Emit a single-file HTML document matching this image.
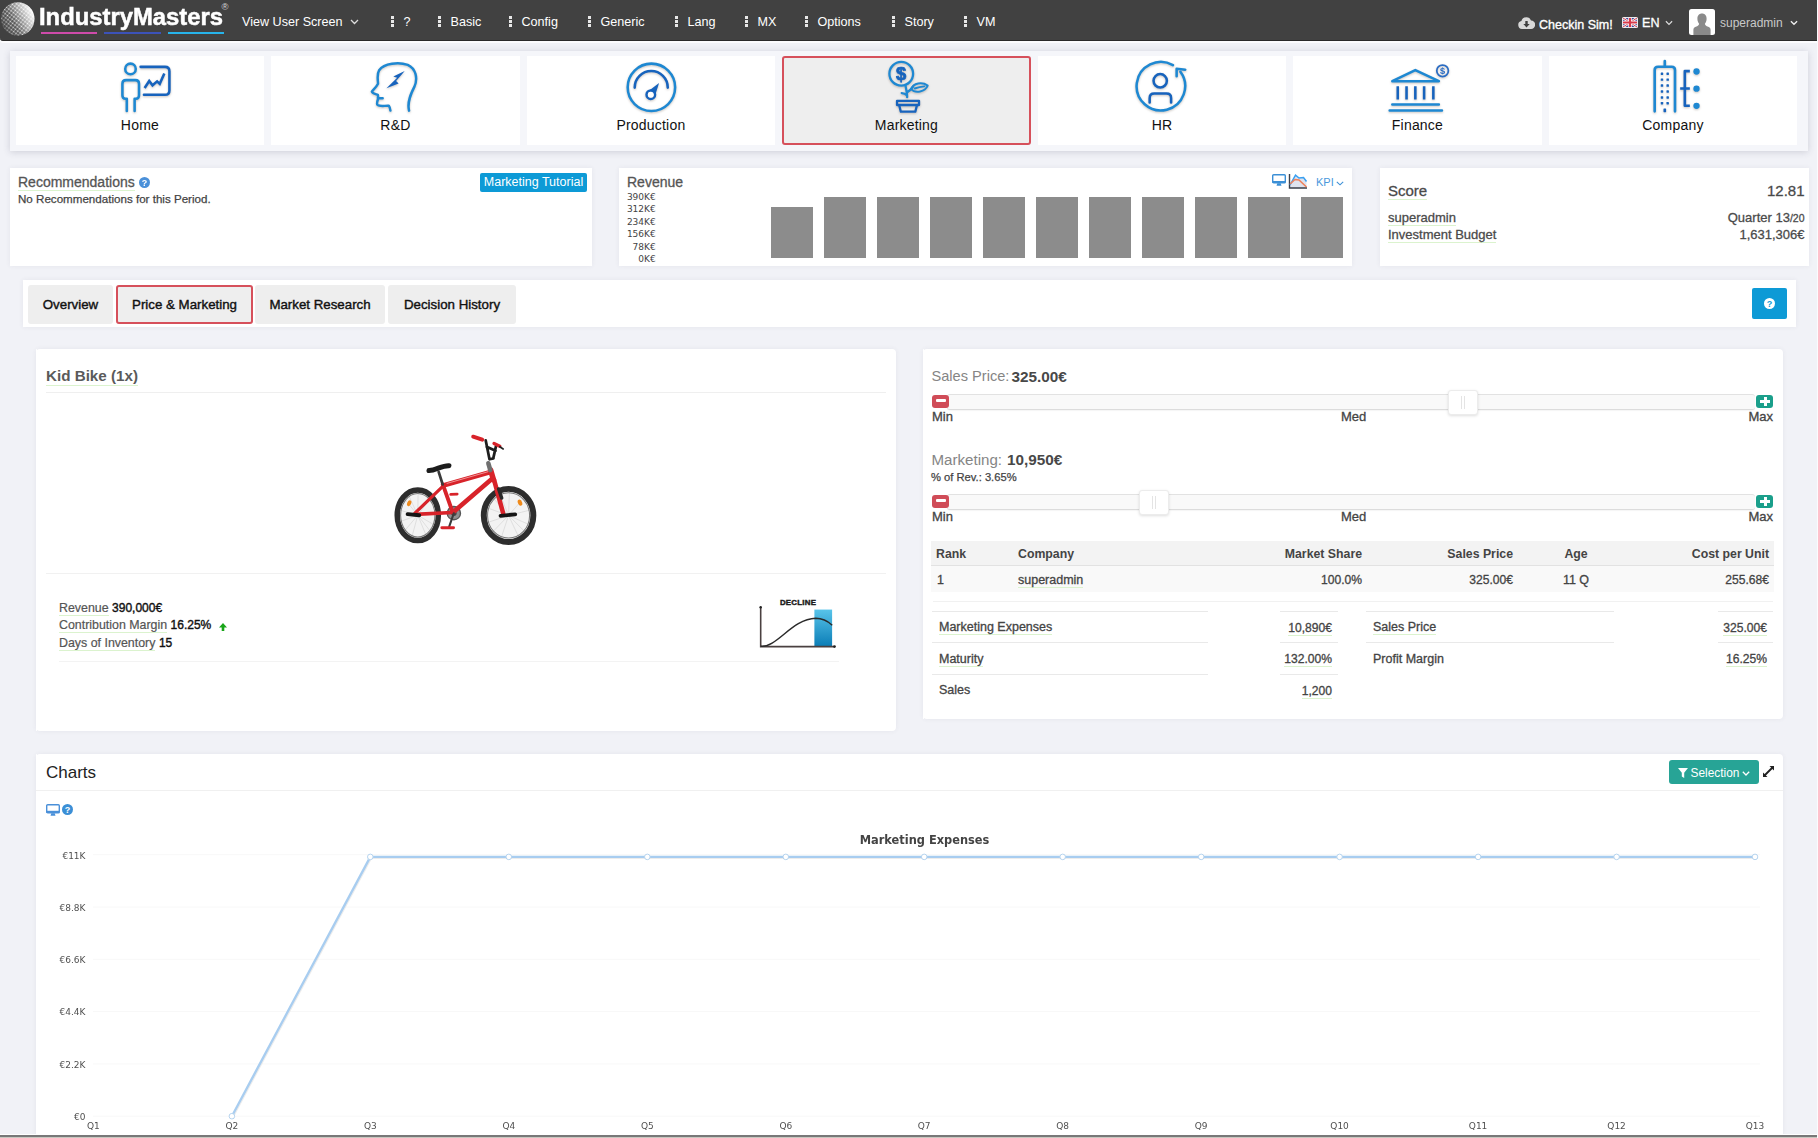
<!DOCTYPE html>
<html lang="en">
<head>
<meta charset="utf-8">
<title>IndustryMasters - Marketing</title>
<style>
*{box-sizing:border-box;margin:0;padding:0}
html,body{width:1818px;height:1138px;overflow:hidden}
body{background:#f1f2f7;font-family:"Liberation Sans",sans-serif;color:#333;position:relative;font-size:13px}
.abs{position:absolute}
/* NAVBAR */
#nav{position:absolute;left:0;top:0;width:1817px;height:41px;background:#414141;border-bottom:1px solid #2a2a2a;border-bottom-left-radius:3px;box-shadow:0 2px 0 #fcfcfe}
#nav .it{position:absolute;top:0;height:41px;line-height:44px;color:#fff;font-size:12.6px;white-space:nowrap}
#nav .dots{display:inline-block;width:3px;height:11px;margin-right:9.5px;vertical-align:-1px;background:
 linear-gradient(#e8e8e8,#e8e8e8) 0 0/3px 3px no-repeat,
 linear-gradient(#e8e8e8,#e8e8e8) 0 4px/3px 3px no-repeat,
 linear-gradient(#e8e8e8,#e8e8e8) 0 8px/3px 3px no-repeat}
.logo-t{position:absolute;left:39px;top:1px;font-weight:bold;font-size:24.2px;color:#fff;letter-spacing:0;line-height:32px;transform-origin:0 0;transform:scaleX(0.985);white-space:nowrap;-webkit-text-stroke:.5px #fff}
/* TILE STRIP */
#strip{position:absolute;left:9.500px;top:51px;width:1798px;height:100px;background:#f5f6fa;box-shadow:0 1px 7px rgba(60,60,90,.2)}
.tile{position:absolute;top:56px;width:248.500px;height:88.600px;background:#fff}
.tile.act{background:#eee;border:2.500px solid #d6505b;border-radius:3px}
.tile .lb{position:absolute;left:0;width:100%;top:61px;text-align:center;font-size:14px;color:#111;line-height:16px;letter-spacing:.2px}
.ic{position:absolute;overflow:visible;filter:drop-shadow(0 1px 1px rgba(60,40,20,.28))}
/* CARDS */
.card{position:absolute;background:#fff;box-shadow:0 0 5px rgba(60,60,80,.07)}
.card:before{content:'';position:absolute;left:-.5px;top:0;width:1px;height:100%;background:#fff;border-radius:inherit}
.h15{font-size:14px;color:#555;line-height:16px;-webkit-text-stroke:.3px #555}
.ul{border-bottom:1px solid #dbf3ce}
.bars i{position:absolute;background:#8c8c8c;display:block}
.ylab{position:absolute;font-family:'DejaVu Sans',sans-serif;font-size:9px;color:#444;text-align:right;width:40px;line-height:10px}
/* tabs */
.tab{position:absolute;top:285px;height:39px;background:#eee;border-radius:3px;font-size:13.3px;color:#111;text-align:center;line-height:39px;-webkit-text-stroke:0.4px #111}
.tab.act{border:2px solid #d6505b;line-height:35px;background:#eee}

.r4{border-radius:4px}
.kv{font-size:12.4px;color:#555;line-height:15px;white-space:nowrap;margin-top:.7px;-webkit-text-stroke:.2px #555}
.kv b{color:#111;font-weight:normal;font-size:12px;-webkit-text-stroke:.4px #111}
.lt{color:#858585}
.trk{position:absolute;height:16px;background:#f9f9f9;border-top:1px solid #e2e2e2;border-bottom:1px solid #dcdcdc;border-radius:3px;box-shadow:0 1px 1px rgba(0,0,0,.04)}
.mbtn,.pbtn{position:absolute;width:17px;height:13px;border-radius:3px}
.mbtn{background:#d04c58}.pbtn{background:#1a9f8b}
.mbtn i{position:absolute;left:4px;top:4px;width:10px;height:3px;background:#fff;border-radius:1px}
.pbtn i{position:absolute;left:4px;top:5px;width:10px;height:3px;background:#fff}
.pbtn em{position:absolute;left:7.500px;top:2px;width:3px;height:9px;background:#fff}
.hdl{position:absolute;width:30px;height:25px;background:#fff;border:1px solid #ececec;border-radius:3px;box-shadow:0 1px 3px rgba(0,0,0,.13)}
.hdl:before,.hdl:after{content:"";position:absolute;top:5px;width:1px;height:13px;background:#e4e4e4;left:12px}
.hdl:after{left:15px}
.sl{font-size:13px;color:#444;line-height:14px;-webkit-text-stroke:.3px #444;margin-top:1px}
.th{font-size:12.300px;font-weight:bold;color:#444;line-height:14px;white-space:nowrap}
.td{font-size:12.500px;color:#444;line-height:14px;white-space:nowrap;-webkit-text-stroke:.3px #444}
.ln{height:1px;background:#e9e9e9}
.nm{font-size:12.100px}
</style>
</head>
<body>

<!-- ================= NAVBAR ================= -->
<div id="nav">
  <svg class="abs" style="left:0;top:0" width="36" height="40" viewBox="0 0 36 40">
    <defs>
      <linearGradient id="gl" x1="0.05" y1="0.75" x2="0.95" y2="0.3">
        <stop offset="0" stop-color="#fff" stop-opacity="0"/><stop offset="0.35" stop-color="#fff" stop-opacity="0.05"/><stop offset="0.7" stop-color="#fff" stop-opacity="0.55"/><stop offset="1" stop-color="#fff" stop-opacity="0.98"/>
      </linearGradient>
      <linearGradient id="gm" x1="0" y1="0.8" x2="1" y2="0.3">
        <stop offset="0" stop-color="#fff" stop-opacity="0.25"/><stop offset="0.3" stop-color="#fff" stop-opacity="0.8"/><stop offset="1" stop-color="#fff" stop-opacity="1"/>
      </linearGradient>
      <pattern id="dots" width="2.950" height="2.950" patternUnits="userSpaceOnUse" patternTransform="rotate(38 17 19)"><circle cx="1.475" cy="1.475" r="1.020" fill="#fff"/></pattern>
      <mask id="dm"><circle cx="17.700" cy="19" r="16.800" fill="url(#gm)"/></mask>
    </defs>
    <circle cx="17.700" cy="19" r="16.800" fill="url(#dots)" mask="url(#dm)"/>
    <circle cx="17.700" cy="19" r="16.800" fill="url(#gl)"/>
  </svg>
  <div class="logo-t">IndustryMasters</div>
  <div class="abs" style="left:221.500px;top:1.500px;font-size:9.500px;color:#d8d8d8;line-height:10px">®</div>
  <div class="abs" style="left:40.500px;top:31.500px;width:56.500px;height:2.500px;background:#cf4bab"></div>
  <div class="abs" style="left:104px;top:31.500px;width:56.500px;height:2.500px;background:#3c52b8"></div>
  <div class="abs" style="left:168px;top:31.500px;width:56px;height:2.500px;background:#27b4ea"></div>

  <div class="it" style="left:242px">View User Screen <svg width="9" height="6" viewBox="0 0 9 6" style="margin-left:4px;vertical-align:1px"><path d="M1 1l3.5 3.5L8 1" fill="none" stroke="#ddd" stroke-width="1.3"/></svg></div>
  <div class="it" style="left:391px"><span class="dots"></span>?</div>
  <div class="it" style="left:438px"><span class="dots"></span>Basic</div>
  <div class="it" style="left:509px"><span class="dots"></span>Config</div>
  <div class="it" style="left:588px"><span class="dots"></span>Generic</div>
  <div class="it" style="left:675px"><span class="dots"></span>Lang</div>
  <div class="it" style="left:745px"><span class="dots"></span>MX</div>
  <div class="it" style="left:805px"><span class="dots"></span>Options</div>
  <div class="it" style="left:892px"><span class="dots"></span>Story</div>
  <div class="it" style="left:964px"><span class="dots"></span>VM</div>

  <svg class="abs" style="left:1518px;top:17px" width="17" height="12" viewBox="0 0 17 12"><path d="M4 12a4 4 0 0 1-.6-7.9A5 5 0 0 1 13 3.6 4.2 4.2 0 0 1 13 12z" fill="#d8d8d8"/><path d="M7.3 4h2.4v3h2L8.5 10.4 5.3 7h2z" fill="#3e3e3e"/></svg>
  <div class="it" style="left:1539px;top:3px;font-size:12.500px;-webkit-text-stroke:.35px #fff">Checkin Sim!</div>
  <svg class="abs" style="left:1622px;top:17px" width="16" height="11" viewBox="0 0 16 11"><rect width="16" height="11" rx="1.5" fill="#e9e9ee"/><rect x="1" y="1" width="14" height="9" fill="#3a4a9a"/><path d="M1 1l14 9M15 1L1 10" stroke="#fff" stroke-width="2.4"/><path d="M1 1l14 9M15 1L1 10" stroke="#d03a4a" stroke-width="1"/><path d="M8 1v9M1 5.5h14" stroke="#fff" stroke-width="3.6"/><path d="M8 1v9M1 5.5h14" stroke="#d8394a" stroke-width="2.2"/></svg>
  <div class="it" style="left:1642px;top:1px;-webkit-text-stroke:.3px #fff">EN <svg width="8" height="6" viewBox="0 0 9 6" style="margin-left:2px;vertical-align:1px"><path d="M1 1l3.5 3.5L8 1" fill="none" stroke="#ddd" stroke-width="1.3"/></svg></div>
  <svg class="abs" style="left:1689px;top:9px" width="26" height="26" viewBox="0 0 26 26"><rect width="26" height="26" rx="2.5" fill="#fff"/><path d="M13 4.5c3 0 4.6 2.2 4.6 5.2 0 2-.7 3.9-1.7 5 .2 1.6 1.2 2.3 3.3 3.1 1.700.7 2.400 1.500 2.400 3.200V26H4.400v-5c0-1.700.7-2.500 2.400-3.200 2.100-.8 3.100-1.500 3.300-3.100-1-1.100-1.700-3-1.700-5 0-3 1.600-5.200 4.600-5.200z" fill="#8a8a8a"/></svg>
  <div class="it" style="left:1720px;top:1px;font-size:12px;color:#c9c9c9">superadmin <svg width="8" height="6" viewBox="0 0 9 6" style="margin-left:3.500px;vertical-align:1px"><path d="M1 1l3.5 3.500L8 1" fill="none" stroke="#eee" stroke-width="1.500"/></svg></div>
</div>

<!-- ================= TILE STRIP ================= -->
<div id="strip"></div>
<div class="tile" style="left:15.7px"><div class="lb">Home</div></div>
<div class="tile" style="left:271.2px"><div class="lb">R&amp;D</div></div>
<div class="tile" style="left:526.7px"><div class="lb">Production</div></div>
<div class="tile act" style="left:782.2px"><div class="lb" style="top:59px">Marketing</div></div>
<div class="tile" style="left:1037.7px"><div class="lb">HR</div></div>
<div class="tile" style="left:1293.2px"><div class="lb">Finance</div></div>
<div class="tile" style="left:1548.7px"><div class="lb">Company</div></div>


<!-- ================= TILE ICONS ================= -->
<svg class="ic" style="left:100px;top:50px" width="100" height="100" viewBox="0 0 1138 1138" fill="none" stroke-width="29" stroke-linecap="round" stroke-linejoin="round">
  <circle cx="347" cy="215" r="60" stroke="#1e88d2"/>
  <path d="M305 695V555h-15q-35 0-35-40V385q0-42 42-42h105q42 0 42 42v130q0 40-35 40h-15v140" stroke="#1e88d2"/>
  <path d="M462 192H740q50 0 50 50v218q0 50-50 50H500" stroke="#1763bd"/>
  <path d="M508 432l52-80 38 50 52-45 30 28 52-118" stroke="#1763bd" stroke-linecap="butt" stroke-linejoin="miter"/>
</svg>
<svg class="ic" style="left:355px;top:50px" width="100" height="100" viewBox="0 0 1138 1138" fill="none" stroke-width="28" stroke-linecap="round" stroke-linejoin="round">
  <path d="M615 690C590 590 640 490 675 420 720 320 690 210 600 170 500 135 330 150 275 230 245 280 262 340 262 385 240 430 195 460 192 475c8 25 50 28 68 35 5 15 2 28 0 38h55h-50c-8 25-22 60-10 75 25 25 90 8 130 12 12 15 15 35 18 55" stroke="#1e88d2"/>
  <path d="M566 240L436 302L480 317L358 434L496 380L468 354z" fill="#1763bd" stroke="none"/>
</svg>
<svg class="ic" style="left:600px;top:50px" width="100" height="100" viewBox="0 0 1138 1138" fill="none" stroke-width="29" stroke-linecap="round" stroke-linejoin="round">
  <circle cx="585" cy="425" r="270" stroke="#1e88d2"/>
  <path d="M395 428a188 188 0 0 1 376 0" stroke="#1763bd"/>
  <circle cx="578" cy="508" r="48" stroke="#1763bd"/>
  <path d="M672 375L560 462l68 52z" fill="#1763bd" stroke="none"/>
  <circle cx="578" cy="508" r="34" fill="#fff" stroke="none"/>
</svg>
<svg class="ic" style="left:856px;top:50px" width="100" height="100" viewBox="0 0 1138 1138" fill="none" stroke-width="26" stroke-linecap="round" stroke-linejoin="round">
  <circle cx="515" cy="270" r="135" stroke="#1e88d2"/>
  <text x="515" y="340" font-size="210" font-weight="bold" fill="#1763bd" stroke="#1763bd" stroke-width="8" text-anchor="middle" font-family="Liberation Sans,sans-serif">$</text>
  <path d="M562 402c10 45 20 90 20 135M520 490c20 0 45 10 58 25M590 475c25-15 45-40 60-60" stroke="#1e88d2"/>
  <path d="M628 445c25-70 125-85 188-40-30 70-140 95-188 40zM668 438c35-14 75-22 110-24" stroke="#1e88d2" stroke-width="22"/>
  <rect x="467" y="578" width="250" height="48" stroke="#1763bd"/>
  <path d="M492 630l18 72h165l18-72" stroke="#1763bd"/>
</svg>
<svg class="ic" style="left:1111px;top:50px" width="100" height="100" viewBox="0 0 1138 1138" fill="none" stroke-width="29" stroke-linecap="round" stroke-linejoin="round">
  <path d="M705 172A276 276 0 1 0 790 248" stroke="#1e88d2"/>
  <path d="M747 298V214l98 10" stroke="#1e88d2"/>
  <circle cx="560" cy="350" r="76" stroke="#1763bd"/>
  <path d="M440 598v-50q0-52 52-52h140q52 0 52 52v50" stroke="#1763bd"/>
</svg>
<svg class="ic" style="left:1367px;top:50px" width="100" height="100" viewBox="0 0 1138 1138" fill="none" stroke-width="29" stroke-linecap="round" stroke-linejoin="round">
  <path d="M288 355L550 228l268 127z" stroke="#1e88d2"/>
  <path d="M350 412v152M450 412v152M550 412v152M650 412v152M755 412v152" stroke="#1763bd" stroke-linecap="butt"/>
  <path d="M288 620h530M258 688h595" stroke="#1e88d2"/>
  <circle cx="860" cy="237" r="66" stroke="#2a6cc4" stroke-width="20"/>
  <text x="860" y="275" font-size="105" font-weight="bold" fill="#2a6cc4" stroke="none" text-anchor="middle" font-family="Liberation Sans,sans-serif">$</text>
</svg>
<svg class="ic" style="left:1622px;top:50px" width="100" height="100" viewBox="0 0 1138 1138" fill="none" stroke-width="30" stroke-linecap="round" stroke-linejoin="round">
  <path d="M372 698V228q0-38 38-38h155q38 0 38 38v470M487 188v-62" stroke="#1e88d2"/>
  <g fill="#1763bd" stroke="none">
    <rect x="441" y="257" width="28" height="28" rx="5"/><rect x="506" y="257" width="28" height="28" rx="5"/>
    <rect x="441" y="323" width="28" height="28" rx="5"/><rect x="506" y="323" width="28" height="28" rx="5"/>
    <rect x="441" y="391" width="28" height="28" rx="5"/><rect x="506" y="391" width="28" height="28" rx="5"/>
    <rect x="441" y="458" width="28" height="28" rx="5"/><rect x="506" y="458" width="28" height="28" rx="5"/>
    <rect x="441" y="526" width="28" height="28" rx="5"/><rect x="506" y="526" width="28" height="28" rx="5"/>
    <rect x="441" y="592" width="28" height="28" rx="5"/><rect x="506" y="592" width="28" height="28" rx="5"/>
    <rect x="472" y="665" width="30" height="42" rx="6"/>
  </g>
  <path d="M772 240h-57v395h57M662 438h110" stroke="#1763bd" stroke-linecap="butt"/>
  <circle cx="848" cy="245" r="36" fill="#1e88d2" stroke="none"/>
  <circle cx="848" cy="440" r="36" fill="#1e88d2" stroke="none"/>
  <circle cx="848" cy="635" r="36" fill="#1e88d2" stroke="none"/>
</svg>

<!-- ================= ROW 2 ================= -->
<div class="card" id="rec" style="left:10px;top:168px;width:582px;height:97.700px">
  <div class="abs h15" style="left:8px;top:6px"><span class="ul">Recommendations</span></div>
  <svg class="abs" style="left:139px;top:177px;position:fixed" width="11" height="11" viewBox="0 0 11 11"><circle cx="5.5" cy="5.5" r="5.5" fill="#4a90d9"/><text x="5.5" y="9" font-size="9" font-weight="bold" fill="#fff" text-anchor="middle" font-family="Liberation Sans,sans-serif">?</text></svg>
  <div class="abs" style="left:8px;top:24px;font-size:11.6px;color:#444;line-height:14px;-webkit-text-stroke:.25px #444">No Recommendations for this Period.</div>
  <div class="abs" style="left:470px;top:5px;width:107px;height:19px;background:#0d9ad6;border-radius:2px;color:#fff;font-size:12.5px;line-height:19px;text-align:center">Marketing Tutorial</div>
</div>

<div class="card" id="rev" style="left:619px;top:168px;width:733px;height:97.700px">
  <div class="abs h15" style="left:8px;top:6px">Revenue</div>
  <div class="ylab" style="left:-3.300px;top:24px">390K€</div>
  <div class="ylab" style="left:-3.300px;top:36px">312K€</div>
  <div class="ylab" style="left:-3.300px;top:49px">234K€</div>
  <div class="ylab" style="left:-3.300px;top:61px">156K€</div>
  <div class="ylab" style="left:-3.300px;top:74px">78K€</div>
  <div class="ylab" style="left:-3.300px;top:86px">0K€</div>
  <div class="bars" style="position:absolute;left:.6px;top:-.3px">
    <i style="left:151px;top:39px;width:42px;height:51px"></i>
    <i style="left:204px;top:29px;width:42px;height:61px"></i>
    <i style="left:257px;top:29px;width:42px;height:61px"></i>
    <i style="left:310px;top:29px;width:42px;height:61px"></i>
    <i style="left:363px;top:29px;width:42px;height:61px"></i>
    <i style="left:416px;top:29px;width:42px;height:61px"></i>
    <i style="left:469px;top:29px;width:42px;height:61px"></i>
    <i style="left:522px;top:29px;width:42px;height:61px"></i>
    <i style="left:575px;top:29px;width:42px;height:61px"></i>
    <i style="left:628px;top:29px;width:42px;height:61px"></i>
    <i style="left:681px;top:29px;width:42px;height:61px"></i>
  </div>
  <svg class="abs" style="left:653px;top:6px" width="14" height="12" viewBox="0 0 14 12"><rect x=".7" y=".7" width="12.600" height="8.200" rx="1" fill="#fff" stroke="#3b8fd6" stroke-width="1.400"/><rect x=".7" y="7" width="12.600" height="2" fill="#3b8fd6"/><path d="M4.500 11.800h5l-.8-2.500H5.300z" fill="#3b8fd6"/></svg>
  <svg class="abs" style="left:669px;top:6px" width="20" height="15" viewBox="0 0 20 15"><path d="M2 11L7.500 1.200 11 4l4.500-.5L18.500 7.500V14H2z" fill="#dfe3ee"/><path d="M1.500 0v14H19" fill="none" stroke="#3a3f4a" stroke-width="1.400"/><path d="M2 11L7.500 1.200 11 4l4.500-.5L18.500 7.500" fill="none" stroke="#3aa0f0" stroke-width="1.500"/><path d="M2 10L7 5.500 11 6l7.500 7" fill="none" stroke="#f0805a" stroke-width="1.500"/></svg>
  <div class="abs" style="left:697px;top:8px;font-size:11px;color:#4a98dc;line-height:12px">KPI</div>
  <svg class="abs" style="left:717px;top:12.500px" width="8" height="5" viewBox="0 0 8 5"><path d="M.8.800L4 3.800 7.200.8" fill="none" stroke="#3b8fd6" stroke-width="1.100"/></svg>
</div>

<div class="card" id="score" style="left:1380px;top:168px;width:428.500px;height:97.700px;-webkit-text-stroke:.3px #555">
  <div class="abs" style="left:8px;top:14px;font-size:15px;color:#444;line-height:18px"><span class="ul">Score</span></div>
  <div class="abs" style="right:4px;top:14px;font-size:15px;color:#444;line-height:18px">12.81</div>
  <div class="abs" style="left:8px;top:42px;font-size:13px;color:#444;line-height:15px"><span class="ul">superadmin</span></div>
  <div class="abs" style="right:4px;top:42px;font-size:13px;color:#444;line-height:15px">Quarter 13<span style="font-size:10.5px">/20</span></div>
  <div class="abs" style="left:8px;top:59px;font-size:13px;color:#444;line-height:15px"><span class="ul">Investment Budget</span></div>
  <div class="abs" style="right:4px;top:59px;font-size:13px;color:#444;line-height:15px">1,631,306€</div>
</div>

<!-- ================= TABS ================= -->
<div class="card" id="tabs" style="left:23px;top:280px;width:1773px;height:47px"></div>
<div class="tab" style="left:28px;width:85px">Overview</div>
<div class="tab act" style="left:116px;width:137px">Price &amp; Marketing</div>
<div class="tab" style="left:255px;width:130px">Market Research</div>
<div class="tab" style="left:388px;width:128px">Decision History</div>
<div class="abs" style="left:1752px;top:288px;width:35px;height:31px;background:#0d9ad6;border-radius:2px">
  <svg class="abs" style="left:12px;top:10px" width="11" height="11" viewBox="0 0 11 11"><circle cx="5.5" cy="5.500" r="5.500" fill="#fff"/><text x="5.500" y="9" font-size="9" font-weight="bold" fill="#0d9ad6" text-anchor="middle" font-family="Liberation Sans,sans-serif">?</text></svg>
</div>


<!-- ================= KID BIKE CARD ================= -->
<div class="card r4" id="bike" style="left:36px;top:349px;width:860px;height:382px">
  <div class="abs" style="left:10px;top:18px;font-size:15.2px;font-weight:bold;color:#5a5a5a;line-height:18px"><span class="ul" style="padding-bottom:1px">Kid Bike (1x)</span></div>
  <div class="abs" style="left:10px;top:43px;width:840px;height:1px;background:#efefef"></div>
  <div class="abs" style="left:10px;top:224px;width:840px;height:1px;background:#f1f1f1"></div>
  <div class="abs kv" style="left:23px;top:251px"><span class="ul">Revenue</span> <b>390,000€</b></div>
  <div class="abs kv" style="left:23px;top:268.700px"><span class="ul">Contribution Margin</span> <b>16.25%</b></div>
  <svg class="abs" style="left:183px;top:273.500px" width="8" height="8" viewBox="0 0 8 8"><path d="M4 0L8 4.500H5.300V8H2.700V4.500H0z" fill="#19a519"/></svg>
  <div class="abs kv" style="left:23px;top:286.500px"><span class="ul">Days of Inventory</span> <b>15</b></div>
  <div class="abs" style="left:23px;top:312px;width:780px;height:1px;background:#f3f3f3"></div>
</div>

<!-- bike picture -->
<svg class="abs" style="left:385px;top:425px" width="160" height="130" viewBox="0 0 1401 1138">
  <ellipse cx="287" cy="790" rx="160" ry="200" fill="#f3f3f3"/>
  <ellipse cx="1082" cy="792" rx="195" ry="210" fill="#f3f3f3"/>
  <g fill="none" stroke="#cfcfcf" stroke-width="5">
    <path d="M287 790L150 620M287 790L420 610M287 790L120 850M287 790L440 880M287 790L230 1000M287 790L370 990M287 790L110 740M287 790L290 580M287 790L200 600M287 790L160 940M287 790L420 960"/>
    <path d="M1082 792L930 620M1082 792L1240 610M1082 792L880 860M1082 792L1280 880M1082 792L1010 1010M1082 792L1180 1000M1082 792L880 720M1082 792L1090 570M1082 792L1290 740M1082 792L1000 590M1082 792L920 960M1082 792L1250 960"/>
  </g>
  <ellipse cx="287" cy="790" rx="180" ry="222" fill="none" stroke="#2d2d2d" stroke-width="48"/>
  <ellipse cx="287" cy="790" rx="150" ry="190" fill="none" stroke="#777" stroke-width="9"/>
  <ellipse cx="1082" cy="792" rx="217" ry="233" fill="none" stroke="#2d2d2d" stroke-width="52"/>
  <ellipse cx="1082" cy="792" rx="184" ry="198" fill="none" stroke="#777" stroke-width="9"/>
  <ellipse cx="212" cy="685" rx="17" ry="26" fill="#f08a1a" transform="rotate(25 212 685)"/>
  <ellipse cx="1182" cy="680" rx="18" ry="28" fill="#f08a1a" transform="rotate(-25 1182 680)"/>
  <circle cx="603" cy="772" r="58" fill="#8f8f8f" stroke="#555" stroke-width="12"/>
  <circle cx="603" cy="772" r="24" fill="#444"/>
  <g fill="none" stroke="#d8232a" stroke-linecap="round">
    <path d="M508 535L262 772" stroke-width="28"/>
    <path d="M592 766L262 782" stroke-width="32"/>
    <path d="M506 520L592 762" stroke-width="34"/>
    <path d="M510 530L925 412" stroke-width="40"/>
    <path d="M940 468L604 758" stroke-width="40"/>
    <path d="M925 395L950 480" stroke-width="48"/>
    <path d="M955 480L1035 775" stroke-width="40"/>
  </g>
  <path d="M540 512L905 408" stroke="#f6b0b0" stroke-width="7" fill="none"/>
  <g fill="none" stroke-linecap="round">
    <path d="M470 410L505 520" stroke="#3a3a3a" stroke-width="24"/>
    <path d="M385 398C440 400 500 352 560 356" stroke="#1c1c1c" stroke-width="44"/>
    <path d="M905 335L922 395" stroke="#6f6f6f" stroke-width="40"/>
    <path d="M915 300L882 135M948 292L972 185M890 190L968 225M915 300L950 292" stroke="#1e1e1e" stroke-width="24"/>
    <path d="M772 102L852 128" stroke="#d8232a" stroke-width="34"/>
    <path d="M955 162L1005 186" stroke="#d8232a" stroke-width="30"/>
    <path d="M1005 190L1035 210" stroke="#222" stroke-width="14"/>
    <path d="M198 780L300 790" stroke="#151515" stroke-width="34"/>
    <path d="M1012 795L1140 782" stroke="#151515" stroke-width="34"/>
    <path d="M603 772L562 890" stroke="#3a3a3a" stroke-width="18"/>
    <path d="M498 900L600 900" stroke="#d8232a" stroke-width="26"/>
    <path d="M575 607L632 605" stroke="#d8232a" stroke-width="24"/>
    <path d="M995 560L1022 640" stroke="#2a2a2a" stroke-width="30"/>
  </g>
</svg>

<!-- life-cycle (DECLINE) -->
<svg class="abs" style="left:745px;top:590px" width="105" height="70" viewBox="0 0 1707 1138">
  <defs><linearGradient id="dg" x1="0" y1="0" x2="0" y2="1"><stop offset="0" stop-color="#58c4ea"/><stop offset="1" stop-color="#0b7db6"/></linearGradient></defs>
  <rect x="1128" y="318" width="288" height="600" fill="url(#dg)"/>
  <path d="M255 280V920H1450" fill="none" stroke="#4a4040" stroke-width="26"/>
  <circle cx="255" cy="280" r="20" fill="#222"/><circle cx="1455" cy="920" r="22" fill="#222"/>
  <path d="M258 915C520 940 760 470 1150 460c110 0 200 50 268 112" fill="none" stroke="#2a2a2a" stroke-width="24"/>
  <text x="862" y="240" font-size="128" font-weight="bold" fill="#1a1a1a" stroke="#1a1a1a" stroke-width="7" text-anchor="middle" font-family="Liberation Sans,sans-serif" letter-spacing="4">DECLINE</text>
</svg>

<!-- ================= PRICE CARD ================= -->
<div class="card r4" id="price" style="left:923px;top:349px;width:860px;height:370px">
  <div class="abs lt" style="left:8.500px;top:17.500px;font-size:14.600px;line-height:19px;white-space:nowrap">Sales Price:</div><div class="abs" style="left:88.500px;top:17.500px;font-size:15.300px;font-weight:bold;color:#484848;line-height:19px;white-space:nowrap">325.00€</div>
  <div class="trk" style="left:24px;top:45px;width:808px"></div>
  <div class="mbtn" style="left:9px;top:46px"><i></i></div>
  <div class="pbtn" style="left:833px;top:46px"><i></i><em></em></div>
  <div class="hdl" style="left:524.500px;top:40.500px"></div>
  <div class="abs sl" style="left:9px;top:60px">Min</div>
  <div class="abs sl" style="left:418px;top:60px">Med</div>
  <div class="abs sl" style="right:10px;top:60px">Max</div>

  <div class="abs lt" style="left:8.500px;top:100.500px;font-size:15.100px;line-height:19px;white-space:nowrap">Marketing:</div><div class="abs" style="left:84px;top:100.500px;font-size:15.300px;font-weight:bold;color:#484848;line-height:19px;white-space:nowrap">10,950€</div>
  <div class="abs" style="left:8px;top:121px;font-size:11.200px;color:#444;line-height:14px;-webkit-text-stroke:.25px #444">% of Rev.: 3.65%</div>
  <div class="trk" style="left:24px;top:145px;width:808px"></div>
  <div class="mbtn" style="left:9px;top:146px"><i></i></div>
  <div class="pbtn" style="left:833px;top:146px"><i></i><em></em></div>
  <div class="hdl" style="left:215.500px;top:140.500px"></div>
  <div class="abs sl" style="left:9px;top:160px">Min</div>
  <div class="abs sl" style="left:418px;top:160px">Med</div>
  <div class="abs sl" style="right:10px;top:160px">Max</div>

  <div class="abs" style="left:8px;top:192px;width:843px;height:25px;background:#f3f3f3;border-bottom:1px solid #e2e2e2"></div>
  <div class="abs" style="left:8px;top:217px;width:843px;height:26px;background:#f9f9f9"></div>
  <div class="abs th" style="left:13px;top:198px">Rank</div>
  <div class="abs th" style="left:95px;top:198px">Company</div>
  <div class="abs th" style="right:421px;top:198px">Market Share</div>
  <div class="abs th" style="right:270px;top:198px">Sales Price</div>
  <div class="abs th" style="left:633px;width:40px;text-align:center;top:198px">Age</div>
  <div class="abs th" style="right:14px;top:198px">Cost per Unit</div>
  <div class="abs td" style="left:14px;top:224px">1</div>
  <div class="abs td" style="left:95px;top:224px"><span class="ul">superadmin</span></div>
  <div class="abs td nm" style="right:421px;top:224px">100.0%</div>
  <div class="abs td nm" style="right:270px;top:224px">325.00€</div>
  <div class="abs td" style="left:628px;width:50px;text-align:center;top:224px">11 Q</div>
  <div class="abs td nm" style="right:14px;top:224px">255.68€</div>

  <div class="abs" style="left:10px;top:252px;width:840px;height:1px;background:#f1f1f1"></div>
  <div class="abs ln" style="left:9px;top:262px;width:276px"></div>
  <div class="abs ln" style="left:357px;top:262px;width:58px"></div>
  <div class="abs ln" style="left:443px;top:262px;width:248px"></div>
  <div class="abs ln" style="left:795px;top:262px;width:55px"></div>
  <div class="abs ln" style="left:9px;top:293px;width:276px"></div>
  <div class="abs ln" style="left:357px;top:293px;width:58px"></div>
  <div class="abs ln" style="left:443px;top:293px;width:248px"></div>
  <div class="abs ln" style="left:795px;top:293px;width:55px"></div>
  <div class="abs ln" style="left:9px;top:325px;width:276px"></div>
  <div class="abs ln" style="left:357px;top:325px;width:58px"></div>
  <div class="abs td" style="left:16px;top:270.8px"><span class="ul">Marketing Expenses</span></div>
  <div class="abs td nm" style="right:451px;top:271.8px"><span class="ul">10,890€</span></div>
  <div class="abs td" style="left:450px;top:270.8px"><span class="ul">Sales Price</span></div>
  <div class="abs td nm" style="right:16px;top:271.8px"><span class="ul">325.00€</span></div>
  <div class="abs td" style="left:16px;top:302.8px"><span class="ul">Maturity</span></div>
  <div class="abs td nm" style="right:451px;top:302.8px"><span class="ul">132.00%</span></div>
  <div class="abs td" style="left:450px;top:302.8px">Profit Margin</div>
  <div class="abs td nm" style="right:16px;top:302.8px"><span class="ul">16.25%</span></div>
  <div class="abs td" style="left:16px;top:334.300px">Sales</div>
  <div class="abs td nm" style="right:451px;top:334.8px"><span class="ul">1,200</span></div>
</div>



<!-- ================= CHARTS CARD ================= -->
<div class="card" id="charts" style="left:36px;top:754px;width:1747px;height:384px;border-radius:4px 4px 0 0">
  <div class="abs" style="left:10px;top:9px;font-size:17px;color:#222;line-height:20px">Charts</div>
  <div class="abs" style="left:0;top:35.500px;width:1747px;height:1px;background:#f0f0f0"></div>
  <div class="abs" style="left:1633px;top:6px;width:90px;height:24px;background:#27a496;border-radius:3px;color:#fff;font-size:12.500px;line-height:26px;white-space:nowrap">
    <svg class="abs" style="left:9px;top:8px" width="10" height="11" viewBox="0 0 10 11"><path d="M0 0h10L6.200 4.800V10L3.800 8.500V4.800z" fill="#fff"/></svg>
    <span class="abs" style="left:21.500px;top:0;font-size:11.900px">Selection</span>
    <svg class="abs" style="left:73px;top:11px" width="8" height="5" viewBox="0 0 8 5"><path d="M.8.800L4 4l3.200-3.200" fill="none" stroke="#fff" stroke-width="1.300"/></svg>
  </div>
  <svg class="abs" style="left:1727px;top:12px" width="11" height="11" viewBox="0 0 11 11"><path d="M6.500 0H11V4.500L9.400 2.900 2.900 9.400 4.500 11H0V6.500L1.600 8.100 8.100 1.600z" fill="#222"/></svg>
  <svg class="abs" style="left:9.500px;top:49.500px" width="14" height="12" viewBox="0 0 14 12"><rect x=".7" y=".7" width="12.600" height="8.200" rx="1" fill="#fff" stroke="#4a90d9" stroke-width="1.400"/><rect x=".7" y="6.800" width="12.600" height="2.200" fill="#4a90d9"/><path d="M4.500 11.800h5l-.8-2.500H5.300z" fill="#4a90d9"/></svg>
  <svg class="abs" style="left:26px;top:50px" width="11" height="11" viewBox="0 0 11 11"><circle cx="5.500" cy="5.500" r="5.500" fill="#3b8fd6"/><text x="5.500" y="9" font-size="9" font-weight="bold" fill="#fff" text-anchor="middle" font-family="Liberation Sans,sans-serif">?</text></svg>
</div>
<svg class="abs" style="left:0;top:0;pointer-events:none" width="1818" height="1138" viewBox="0 0 1818 1138">
  <style>.ax{font-family:"DejaVu Sans","Liberation Sans",sans-serif;font-size:9px;fill:#505050}</style>
  <text x="924.500" y="843.900" text-anchor="middle" font-family="DejaVu Sans,Liberation Sans,sans-serif" font-weight="bold" font-size="11.400" fill="#444">Marketing Expenses</text>
    <path d="M93 854.7H1760" stroke="#f8f8f8" stroke-width="1"/>
    <path d="M93 907.0H1760" stroke="#f8f8f8" stroke-width="1"/>
    <path d="M93 959.3H1760" stroke="#f8f8f8" stroke-width="1"/>
    <path d="M93 1011.6H1760" stroke="#f8f8f8" stroke-width="1"/>
    <path d="M93 1063.9H1760" stroke="#f8f8f8" stroke-width="1"/>
    <path d="M93 1116.2H1760" stroke="#f8f8f8" stroke-width="1"/>
    <text x="85.500" y="858.5" text-anchor="end" class="ax">€11K</text>
    <text x="85.500" y="910.8" text-anchor="end" class="ax">€8.8K</text>
    <text x="85.500" y="963.1" text-anchor="end" class="ax">€6.6K</text>
    <text x="85.500" y="1015.4" text-anchor="end" class="ax">€4.4K</text>
    <text x="85.500" y="1067.7" text-anchor="end" class="ax">€2.2K</text>
    <text x="85.500" y="1120.0" text-anchor="end" class="ax">€0</text>
    <text x="93.4" y="1129" text-anchor="middle" class="ax">Q1</text>
    <text x="231.9" y="1129" text-anchor="middle" class="ax">Q2</text>
    <text x="370.3" y="1129" text-anchor="middle" class="ax">Q3</text>
    <text x="508.8" y="1129" text-anchor="middle" class="ax">Q4</text>
    <text x="647.3" y="1129" text-anchor="middle" class="ax">Q5</text>
    <text x="785.8" y="1129" text-anchor="middle" class="ax">Q6</text>
    <text x="924.2" y="1129" text-anchor="middle" class="ax">Q7</text>
    <text x="1062.7" y="1129" text-anchor="middle" class="ax">Q8</text>
    <text x="1201.2" y="1129" text-anchor="middle" class="ax">Q9</text>
    <text x="1339.6" y="1129" text-anchor="middle" class="ax">Q10</text>
    <text x="1478.1" y="1129" text-anchor="middle" class="ax">Q11</text>
    <text x="1616.6" y="1129" text-anchor="middle" class="ax">Q12</text>
    <text x="1755.0" y="1129" text-anchor="middle" class="ax">Q13</text>
    <path d="M231.9 1116.2L370.3 856.9L508.8 856.9L647.3 856.9L785.8 856.9L924.2 856.9L1062.7 856.9L1201.2 856.9L1339.6 856.9L1478.1 856.9L1616.6 856.9L1755.0 856.9" fill="none" stroke="#e0e0e0" stroke-width="2" transform="translate(.8,1.200)" opacity=".6"/>
    <path d="M231.9 1116.2L370.3 856.9L508.8 856.9L647.3 856.9L785.8 856.9L924.2 856.9L1062.7 856.9L1201.2 856.9L1339.6 856.9L1478.1 856.9L1616.6 856.9L1755.0 856.9" fill="none" stroke="#a8cdf0" stroke-width="2.300" stroke-linejoin="round"/>
    <circle cx="231.9" cy="1116.2" r="2.8" fill="#fff" stroke="#b5d3ee" stroke-width="1"/>
    <circle cx="370.3" cy="856.9" r="2.8" fill="#fff" stroke="#b5d3ee" stroke-width="1"/>
    <circle cx="508.8" cy="856.9" r="2.8" fill="#fff" stroke="#b5d3ee" stroke-width="1"/>
    <circle cx="647.3" cy="856.9" r="2.8" fill="#fff" stroke="#b5d3ee" stroke-width="1"/>
    <circle cx="785.8" cy="856.9" r="2.8" fill="#fff" stroke="#b5d3ee" stroke-width="1"/>
    <circle cx="924.2" cy="856.9" r="2.8" fill="#fff" stroke="#b5d3ee" stroke-width="1"/>
    <circle cx="1062.7" cy="856.9" r="2.8" fill="#fff" stroke="#b5d3ee" stroke-width="1"/>
    <circle cx="1201.2" cy="856.9" r="2.8" fill="#fff" stroke="#b5d3ee" stroke-width="1"/>
    <circle cx="1339.6" cy="856.9" r="2.8" fill="#fff" stroke="#b5d3ee" stroke-width="1"/>
    <circle cx="1478.1" cy="856.9" r="2.8" fill="#fff" stroke="#b5d3ee" stroke-width="1"/>
    <circle cx="1616.6" cy="856.9" r="2.8" fill="#fff" stroke="#b5d3ee" stroke-width="1"/>
    <circle cx="1755.0" cy="856.9" r="2.8" fill="#fff" stroke="#b5d3ee" stroke-width="1"/>
</svg>
<!-- page edges -->
<div class="abs" style="left:0;top:1134px;width:1818px;height:1px;background:#fff"></div>
<div class="abs" style="left:0;top:1135px;width:1817px;height:2px;background:#787878"></div>
<div class="abs" style="left:0;top:1137px;width:1817px;height:1px;background:#c8c8c0"></div>
<div class="abs" style="left:1817px;top:0;width:1px;height:1138px;background:#fbfbfd"></div>


</body>
</html>
